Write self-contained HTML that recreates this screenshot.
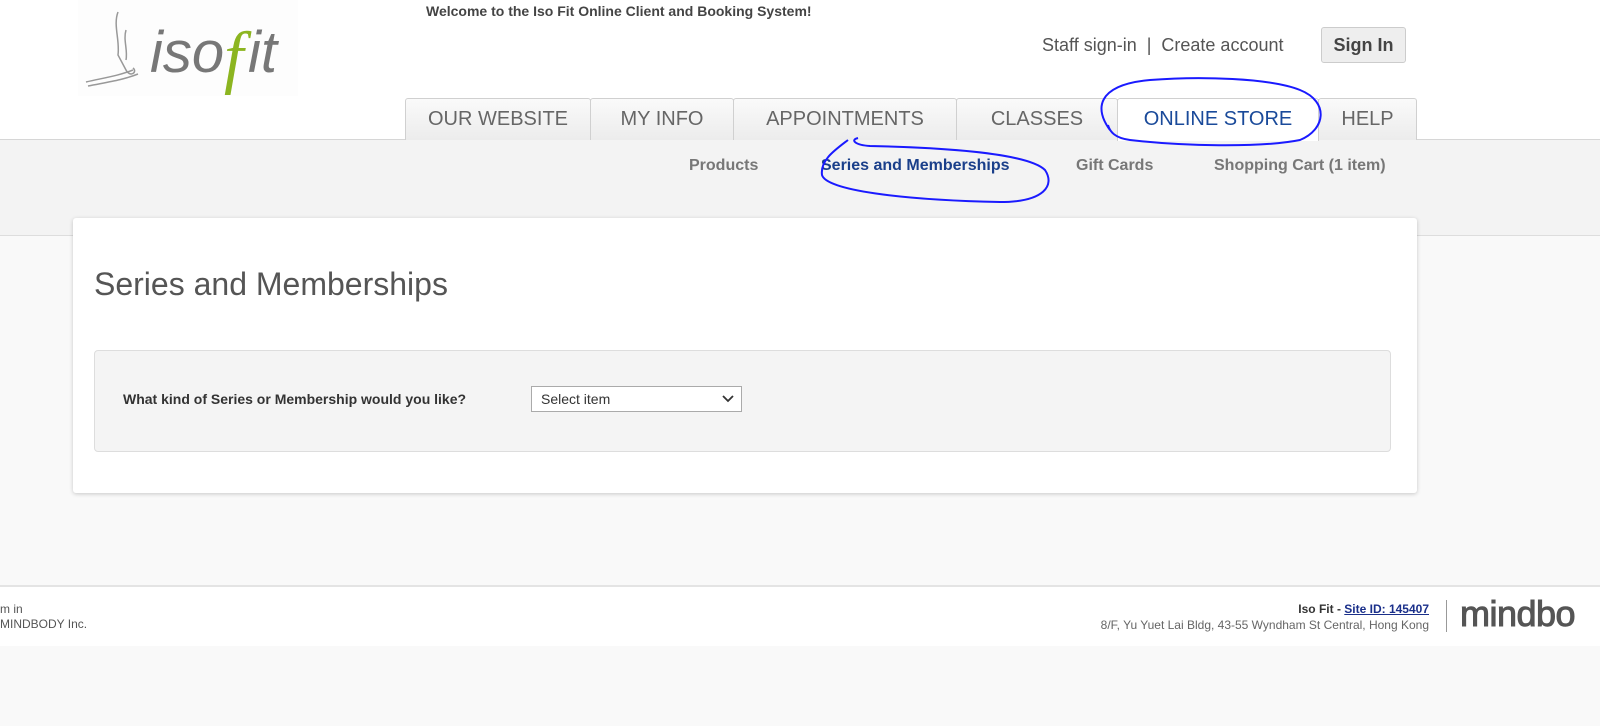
<!DOCTYPE html>
<html><head><style>
*{margin:0;padding:0;box-sizing:border-box}
body{width:1600px;height:726px;background:#f9f9f9;font-family:"Liberation Sans",Arial,sans-serif;position:relative;overflow:hidden}
.top{position:absolute;left:0;top:0;width:1600px;height:140px;background:#fff;border-bottom:1px solid #d6d6d6}
.band{position:absolute;left:0;top:140px;width:1600px;height:96px;background:#f3f3f3;border-bottom:1px solid #ddd}
.abs{position:absolute}
.tab{position:absolute;top:98px;height:42px;border:1px solid #d0d0d0;border-bottom:none;background:linear-gradient(#fafafa,#ececec);color:#666;font-size:20px;text-align:center;line-height:40px;border-radius:3px 3px 0 0}
.sub{position:absolute;top:157px;font-size:16px;font-weight:bold;color:#777}
.card{position:absolute;left:73px;top:218px;width:1344px;height:275px;background:#fff;box-shadow:0 1px 4px rgba(0,0,0,.2);border-radius:3px}
.footer{position:absolute;left:0;top:585px;width:1600px;height:61px;background:#fff;border-top:2px solid #e4e4e4}
</style></head><body>
<div class="top"></div>
<div class="band"></div>
<div class="abs" style="left:78px;top:0;width:220px;height:96px;background:#fdfdfd">
<svg width="220" height="96"><g fill="none" stroke="#999" stroke-width="1.5"><path d="M40 12 C35 25 42 40 40 55 L48 70 C52 78 60 72 55 68"/><path d="M48 30 C45 40 50 50 48 60"/><path d="M8 82 C25 78 40 76 55 70"/><path d="M10 86 C30 82 45 80 60 74"/></g>
<text x="72" y="72" font-family="Liberation Sans,sans-serif" font-style="italic" font-size="58" fill="#777">iso</text>
<text x="146" y="80" font-family="Liberation Serif,serif" font-style="italic" font-size="70" fill="#8cb520">f</text>
<text x="170" y="72" font-family="Liberation Sans,sans-serif" font-style="italic" font-size="58" fill="#777">it</text></svg></div>
<div class="abs" style="left:426px;top:3px;font-size:14px;font-weight:bold;color:#444">Welcome to the Iso Fit Online Client and Booking System!</div>
<div class="abs" style="left:1042px;top:35px;font-size:18px;color:#555">Staff sign-in &nbsp;| &nbsp;Create account</div>
<div class="abs" style="left:1321px;top:27px;width:85px;height:36px;border:1px solid #ccc;background:#eee;border-radius:3px;font-size:18px;font-weight:bold;color:#444;text-align:center;line-height:34px">Sign In</div>
<div class="tab" style="left:405px;width:186px">OUR WEBSITE</div>
<div class="tab" style="left:590px;width:144px">MY INFO</div>
<div class="tab" style="left:733px;width:224px">APPOINTMENTS</div>
<div class="tab" style="left:956px;width:162px">CLASSES</div>
<div class="tab" style="left:1117px;width:202px;background:#fff;color:#1a4a9a;height:43px">ONLINE STORE</div>
<div class="tab" style="left:1318px;width:99px">HELP</div>
<div class="sub" style="left:689px">Products</div>
<div class="sub" style="left:821px;color:#1a3f8a">Series and Memberships</div>
<div class="sub" style="left:1076px">Gift Cards</div>
<div class="sub" style="left:1214px">Shopping Cart (1 item)</div>
<div class="card">
<div class="abs" style="left:21px;top:48px;font-size:32px;color:#555">Series and Memberships</div>
<div class="abs" style="left:21px;top:132px;width:1297px;height:102px;background:#f4f4f4;border:1px solid #ddd;border-radius:4px">
<div class="abs" style="left:28px;top:40px;font-size:14px;font-weight:bold;color:#333">What kind of Series or Membership would you like?</div>
<div class="abs" style="left:436px;top:35px;width:211px;height:26px;border:1px solid #aaa;background:#fff;font-size:14px;color:#333;padding:4px 9px">Select item
<svg class="abs" style="left:190px;top:8px" width="12" height="8"><path d="M1 1 L6 6 L11 1" fill="none" stroke="#333" stroke-width="1.8"/></svg></div>
</div></div>
<div class="footer">
<div class="abs" style="left:0;top:15px;font-size:12px;color:#555;line-height:15px">m in<br>MINDBODY Inc.</div>
<div class="abs" style="right:171px;top:14px;font-size:12px;color:#666;text-align:right;line-height:16px"><b style="color:#333">Iso Fit - <u style="color:#1a2f8a">Site ID: 145407</u></b><br>8/F, Yu Yuet Lai Bldg, 43-55 Wyndham St Central, Hong Kong</div>
<div class="abs" style="left:1446px;top:13px;width:1px;height:32px;background:#999"></div>
<div class="abs" style="left:1460px;top:6px;font-size:36px;color:#555;letter-spacing:-0.5px;-webkit-text-stroke:1px #555">mindbo</div>
</div>
<svg class="abs" style="left:0;top:0" width="1600" height="726"><g fill="none" stroke="#1a1aff" stroke-width="2">
<path d="M1110 130 C1095 110 1095 85 1150 80 C1200 76 1270 78 1300 90 C1330 102 1325 130 1300 140 C1260 148 1180 146 1130 140 C1115 138 1110 132 1108 125"/>
<path d="M848 140 C835 150 820 160 822 175 C826 190 900 200 1000 202 C1045 202 1055 185 1045 170 C1030 155 960 148 870 146 C855 145 850 140 858 138"/>
</g></svg>
</body></html>
